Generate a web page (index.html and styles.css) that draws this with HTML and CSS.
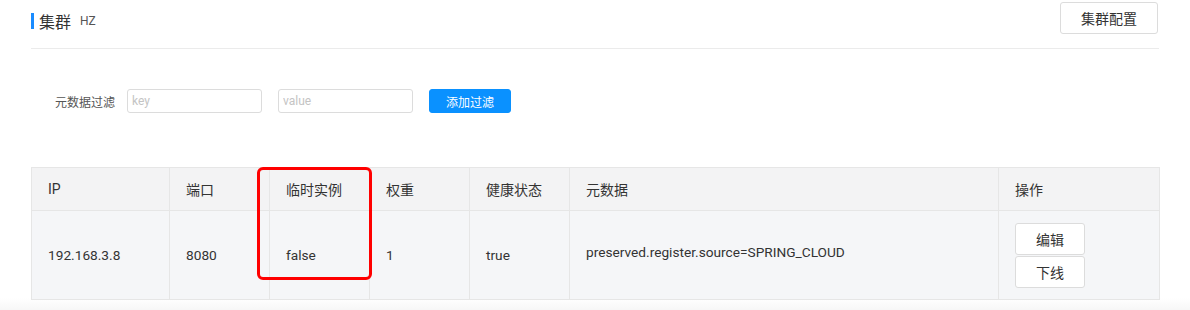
FILE: index.html
```html
<!DOCTYPE html>
<html lang="en">
<head>
    <meta charset="UTF-8">
    <title>集群</title>
    <link rel="stylesheet" href="styles.css">
</head>
<body>
    <div class="page">
        <div class="cluster-head">
            <div class="cluster-title">
                <span class="title-bar"></span>
                <span class="title-text">集群</span>
                <span class="title-name">HZ</span>
            </div>
            <button class="btn btn-default btn-config">集群配置</button>
        </div>

        <div class="filter">
            <label class="filter-label">元数据过滤</label>
            <input class="filter-input" type="text" placeholder="key">
            <input class="filter-input" type="text" placeholder="value">
            <button class="btn btn-primary">添加过滤</button>
        </div>

        <div class="table-wrap">
            <table class="instance-table">
                <colgroup>
                    <col style="width: 138px">
                    <col style="width: 100px">
                    <col style="width: 100px">
                    <col style="width: 100px">
                    <col style="width: 100px">
                    <col style="width: 429px">
                    <col style="width: 161px">
                </colgroup>
                <thead>
                    <tr>
                        <th>IP</th>
                        <th>端口</th>
                        <th>临时实例</th>
                        <th>权重</th>
                        <th>健康状态</th>
                        <th>元数据</th>
                        <th>操作</th>
                    </tr>
                </thead>
                <tbody>
                    <tr>
                        <td>192.168.3.8</td>
                        <td>8080</td>
                        <td>false</td>
                        <td>1</td>
                        <td>true</td>
                        <td><div class="metadata">preserved.register.source=SPRING_CLOUD</div></td>
                        <td>
                            <div class="actions">
                                <button class="btn btn-default btn-small">编辑</button>
                                <button class="btn btn-default btn-small">下线</button>
                            </div>
                        </td>
                    </tr>
                </tbody>
            </table>
            <div class="highlight"></div>
        </div>
    </div>
</body>
</html>
```

FILE: styles.css
```css
body {
    margin: 0;
    font-family: Roboto, "Noto Sans CJK SC", sans-serif;
    color: #333;
    background: linear-gradient(to bottom, #ffffff 0, #ffffff 298px, #f7f7f7 310px);
    height: 310px;
    overflow: hidden;
}
.page {
    width: 1128px;
    margin-left: 31px;
}
.cluster-head {
    display: flex;
    justify-content: space-between;
    align-items: flex-start;
    padding-top: 2px;
    height: 46px;
    border-bottom: 1px solid #ebebeb;
}
.cluster-title {
    display: flex;
    align-items: center;
    margin-top: 7px;
}
.title-bar {
    width: 3px;
    height: 16px;
    background-color: #1a8cff;
    margin-right: 5px;
}
.title-text {
    font-size: 16px;
}
.title-name {
    font-size: 12px;
    color: #555;
    margin-left: 9px;
}
.btn {
    font-family: Roboto, "Noto Sans CJK SC", sans-serif;
    border-radius: 3px;
    cursor: pointer;
    box-sizing: border-box;
}
.btn-default {
    background-color: #fff;
    border: 1px solid #dcdcdc;
    color: #333;
}
.btn-config {
    width: 98px;
    height: 32px;
    font-size: 14px;
    margin-right: 1px;
}
.btn-primary {
    background-color: #0a91ff;
    border: 1px solid #0a91ff;
    color: #fff;
    width: 82px;
    height: 24px;
    font-size: 12px;
}
.filter {
    display: flex;
    align-items: center;
    margin-top: 40px;
    padding-left: 24px;
}
.filter-label {
    font-size: 12px;
    color: #555;
    margin-right: 12px;
}
.filter-input {
    width: 135px;
    height: 24px;
    box-sizing: border-box;
    border: 1px solid #dcdcdc;
    border-radius: 3px;
    padding: 0 4px;
    margin-right: 16px;
    font-size: 12px;
    font-family: Roboto, sans-serif;
}
.filter-input::placeholder {
    color: #c4c4c4;
}
.table-wrap {
    position: relative;
    margin-top: 54px;
}
.instance-table {
    width: 1128px;
    border-collapse: collapse;
    table-layout: fixed;
    font-size: 13.7px;
}
.instance-table th,
.instance-table td {
    border: 1px solid #e6e6e6;
    text-align: left;
    padding: 0 0 0 16px;
    font-weight: normal;
}
.instance-table th {
    background-color: #f3f3f4;
    height: 42px;
    font-size: 14px;
}
.instance-table td {
    background-color: #f5f6f8;
    height: 88px;
}
.metadata {
    margin-top: -6px;
}
.actions {
    display: flex;
    flex-direction: column;
    gap: 1px;
}
.btn-small {
    width: 70px;
    height: 32px;
    font-size: 14px;
}
.highlight {
    position: absolute;
    left: 226px;
    top: 0;
    width: 109px;
    height: 107px;
    border: 3px solid #f00;
    border-radius: 6px;
}
```
